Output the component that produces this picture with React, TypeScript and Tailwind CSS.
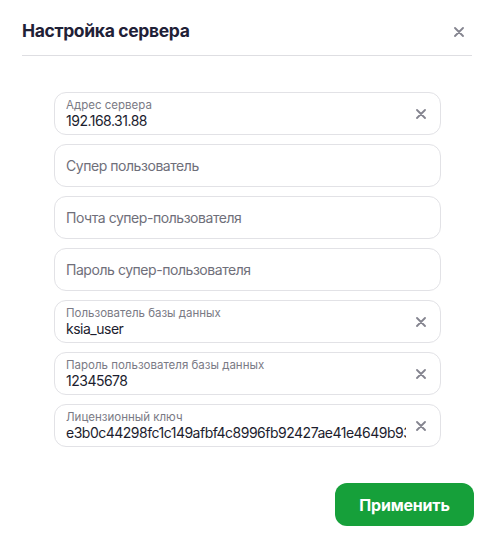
import React from "react";

const XIcon = ({ className = "" }: { className?: string }) => (
  <svg viewBox="0 0 10 10" className={className} fill="none" stroke="currentColor" strokeWidth="1.8" strokeLinecap="round">
    <path d="M1 1 L9 9 M9 1 L1 9" />
  </svg>
);

const Field = ({ label, value }: { label: string; value?: string }) => {
  if (!value) {
    return (
      <div className="h-[43px] rounded-[12px] border border-[#e2e2e6] flex items-center px-[11px]">
        <span className="text-[14px] tracking-[-0.45px] text-[#6f6f7a]">{label}</span>
      </div>
    );
  }
  return (
    <div className="h-[43px] rounded-[12px] border border-[#e2e2e6] flex items-center pl-[11px] pr-[14px]">
      <div className="flex-1 min-w-0 flex flex-col overflow-hidden pr-[10px]">
        <span className="text-[11.5px] leading-[14px] text-[#7a7a85]">{label}</span>
        <span className="text-[14px] leading-[18px] tracking-[-0.5px] text-[#1c1d2e] whitespace-nowrap overflow-hidden">{value}</span>
      </div>
      <XIcon className="w-[10px] h-[10px] text-[#84848f] shrink-0" />
    </div>
  );
};

export default function App() {
  return (
    <div className="w-[494px] h-[550px] bg-white font-['Inter',sans-serif]">
      <div className="px-[22px] pt-[19px]">
        <div className="flex items-center justify-between h-[24px]">
          <h1 className="text-[17.5px] font-bold text-[#1f2137] tracking-[-0.35px]">Настройка сервера</h1>
          <XIcon className="w-[10px] h-[10px] text-[#84848f] mr-[8px] mt-[2px]" />
        </div>
        <div className="mt-[12px] h-px bg-[#dedee2]" />
      </div>
      <div className="ml-[54px] w-[387px] mt-[36px] flex flex-col gap-[9px]">
        <Field label="Адрес сервера" value="192.168.31.88" />
        <Field label="Супер пользователь" />
        <Field label="Почта супер-пользователя" />
        <Field label="Пароль супер-пользователя" />
        <Field label="Пользователь базы данных" value="ksia_user" />
        <Field label="Пароль пользователя базы данных" value="12345678" />
        <Field label="Лицензионный ключ" value="e3b0c44298fc1c149afbf4c8996fb92427ae41e4649b934ca495991b7852b855" />
      </div>
      <div className="flex justify-end pr-[20px] mt-[36px]">
        <button className="w-[139px] h-[43px] rounded-[12px] bg-[#16a03a] text-white text-[16px] font-bold tracking-[-0.2px]">
          Применить
        </button>
      </div>
    </div>
  );
}
